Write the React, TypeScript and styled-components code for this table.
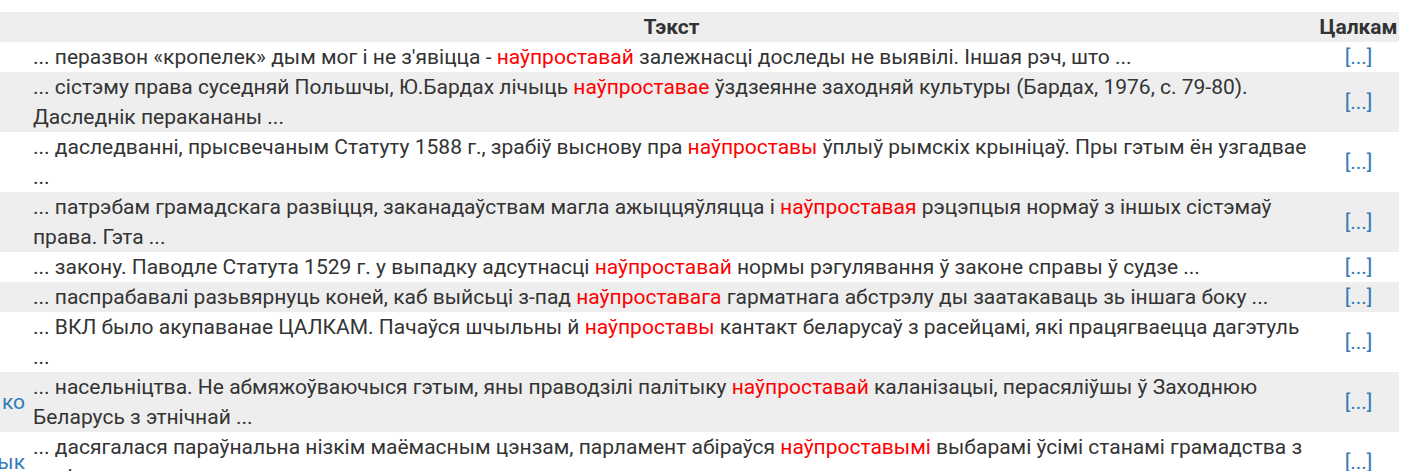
import * as React from 'react';
import styled, { createGlobalStyle } from 'styled-components';

const GlobalStyle = createGlobalStyle`
    body {
        margin: 0;
        background: #fff;
        font-family: Roboto, "Noto Sans", sans-serif;
        color: #333;
        overflow: hidden;
    }
`;

const Page = styled.div`
    padding-top: 12px;
    width: 1399px;
`;

const StyledTable = styled.table`
    width: 100%;
    border-collapse: collapse;
    font-size: 21px;
    line-height: 30px;
`;

const StyledTr = styled.tr<{ $shaded?: boolean }>`
    background: ${(p) => (p.$shaded ? '#eee' : '#fff')};
`;

const StyledTh = styled.th`
    font-weight: 700;
    padding: 0;
    text-align: center;
`;

const SourceTd = styled.td`
    width: 25px;
    padding: 0;
    vertical-align: middle;
`;

const SourceClip = styled.div`
    display: flex;
    justify-content: flex-end;
    overflow: hidden;
    white-space: nowrap;
    width: 25px;
`;

const TextTd = styled.td`
    padding: 0 6px 0 8px;
    vertical-align: middle;
`;

const MoreTd = styled.td`
    width: 81px;
    padding: 0;
    text-align: center;
    vertical-align: middle;
`;

const Link = styled.a`
    color: #337ab7;
    text-decoration: none;
`;

const Hit = styled.span`
    color: #f00;
`;

type Row = { src?: string; before: string; hit: string; after: string };

const rows: Row[] = [
    { before: '... перазвон «кропелек» дым мог і не з\'явіцца - ', hit: 'наўпроставай', after: ' залежнасці доследы не выявілі. Іншая рэч, што ...' },
    { before: '... сістэму права суседняй Польшчы, Ю.Бардах лічыць ', hit: 'наўпроставае', after: ' ўздзеянне заходняй культуры (Бардах, 1976, с. 79-80). Даследнік перакананы ...' },
    { before: '... даследванні, прысвечаным Статуту 1588 г., зрабіў выснову пра ', hit: 'наўпроставы', after: ' ўплыў рымскіх крыніцаў. Пры гэтым ён узгадвае ...' },
    { before: '... патрэбам грамадскага развіцця, заканадаўствам магла ажыццяўляцца і ', hit: 'наўпроставая', after: ' рэцэпцыя нормаў з іншых сістэмаў права. Гэта ...' },
    { before: '... закону. Паводле Статута 1529 г. у выпадку адсутнасці ', hit: 'наўпроставай', after: ' нормы рэгулявання ў законе справы ў судзе ...' },
    { before: '... паспрабавалі разьвярнуць коней, каб выйсьці з-пад ', hit: 'наўпроставага', after: ' гарматнага абстрэлу ды заатакаваць зь іншага боку ...' },
    { before: '... ВКЛ было акупаванае ЦАЛКАМ. Пачаўся шчыльны й ', hit: 'наўпроставы', after: ' кантакт беларусаў з расейцамі, які працягваецца дагэтуль ...' },
    { src: 'ко', before: '... насельніцтва. Не абмяжоўваючыся гэтым, яны праводзілі палітыку ', hit: 'наўпроставай', after: ' каланізацыі, перасяліўшы ў Заходнюю Беларусь з этнічнай ...' },
    { src: 'ык', before: '... дасягалася параўнальна нізкім маёмасным цэнзам, парламент абіраўся ', hit: 'наўпроставымі', after: ' выбарамі ўсімі станамі грамадства з краіны ...' },
];

const App = () => (
    <Page>
        <GlobalStyle />
        <StyledTable>
            <thead>
                <StyledTr $shaded>
                    <StyledTh />
                    <StyledTh>Тэкст</StyledTh>
                    <StyledTh>Цалкам</StyledTh>
                </StyledTr>
            </thead>
            <tbody>
                {rows.map((r, i) => (
                    <StyledTr key={i} $shaded={i % 2 === 1}>
                        <SourceTd>
                            <SourceClip>{r.src ? <Link href="#">{r.src}</Link> : null}</SourceClip>
                        </SourceTd>
                        <TextTd>
                            {r.before}
                            <Hit>{r.hit}</Hit>
                            {r.after}
                        </TextTd>
                        <MoreTd>
                            <Link href="#">[...]</Link>
                        </MoreTd>
                    </StyledTr>
                ))}
            </tbody>
        </StyledTable>
    </Page>
);

export default App;
